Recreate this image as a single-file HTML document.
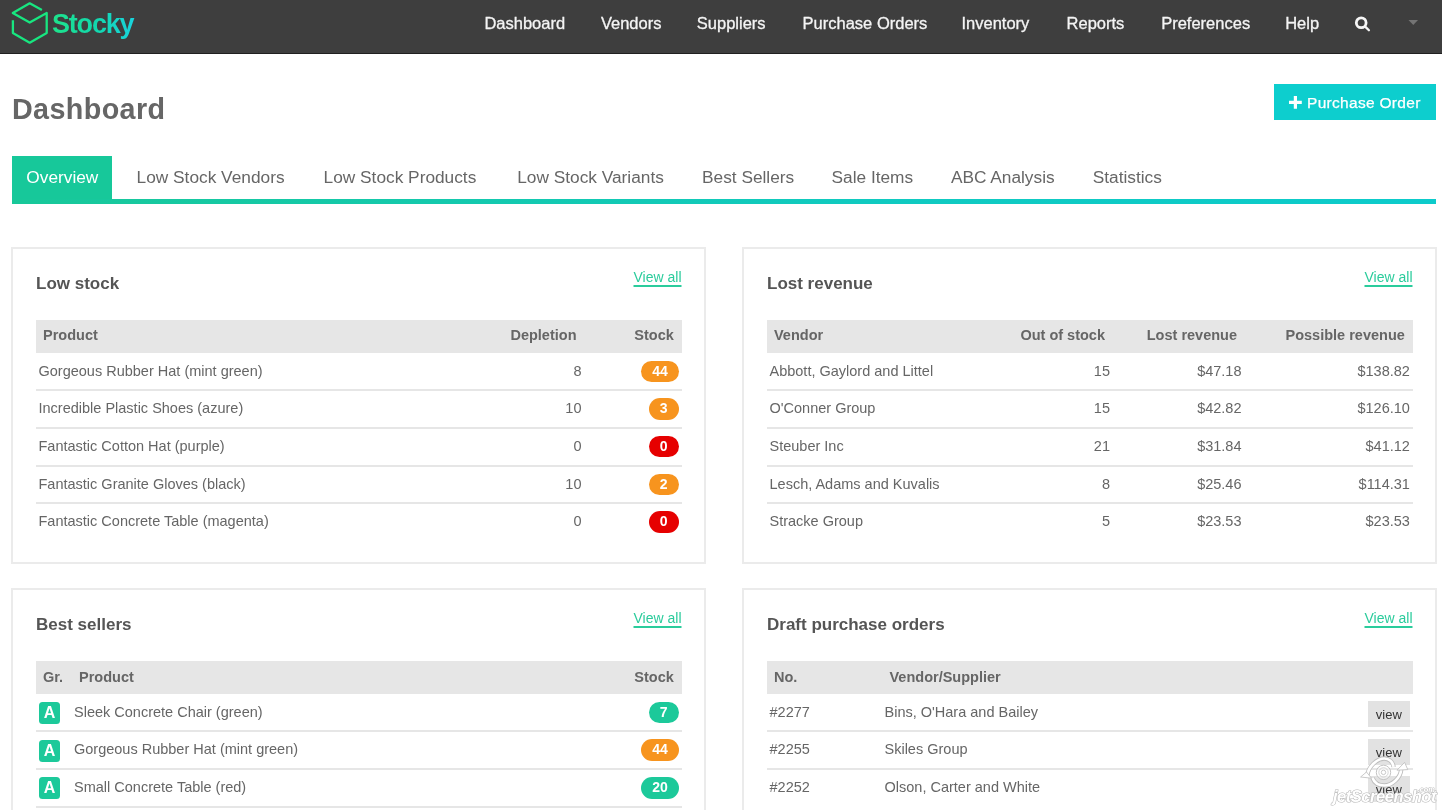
<!DOCTYPE html>
<html><head><meta charset="utf-8">
<style>
*{box-sizing:border-box;margin:0;padding:0}
html,body{width:1442px;height:810px;overflow:hidden;background:#fff}
body{position:relative;font-family:"Liberation Sans",sans-serif;color:#555;-webkit-font-smoothing:antialiased}
.abs{position:absolute;white-space:nowrap}
#nav{position:absolute;left:0;top:0;width:1442px;height:54px;background:#3e3e3e;border-bottom:1px solid #202020}
.ni{position:absolute;top:13.4px;line-height:20px;font-size:16.5px;color:#f4f4f4;-webkit-text-stroke:0.3px #f4f4f4}
#logo-text{position:absolute;left:52px;top:3.64px;line-height:40px;font-size:27px;font-weight:700;letter-spacing:-1.2px;padding-right:6px;
  background:linear-gradient(90deg,#1ee38a 0%,#12d8ad 50%,#1ad3e3 100%);-webkit-background-clip:text;background-clip:text;color:transparent}
#title{position:absolute;left:12px;top:98.8px;line-height:20px;font-size:28.7px;font-weight:700;color:#666;letter-spacing:0.4px}
#btn{position:absolute;left:1273.5px;top:83.6px;width:162.8px;height:36.2px;background:#0dcece}
#btn .t{position:absolute;left:33.5px;top:9.5px;line-height:20px;font-size:15.5px;letter-spacing:0.3px;color:#fff;-webkit-text-stroke:0.25px #fff}
#tabs{position:absolute;left:11.5px;top:155.5px;width:1424.5px;height:48.5px}
#tabline{position:absolute;left:0;top:43.5px;width:100%;height:5px;background:linear-gradient(90deg,#18c899 0%,#10cac0 60%,#0ccbcb 100%)}
#tabact{position:absolute;left:0;top:0;width:100px;height:44px;background:#17c89a}
.tab{position:absolute;top:11.8px;line-height:20px;font-size:17.3px;color:#666}
.panel{position:absolute;width:695px;border:2px solid #ebebeb;background:#fff}
.ptitle{position:absolute;left:23px;top:25.3px;line-height:20px;font-size:17px;font-weight:700;color:#555}
.viewall{position:absolute;right:22.5px;top:18.6px;line-height:20px;font-size:14px;color:#2bcc9c;text-decoration:underline;text-underline-offset:2.5px;text-decoration-thickness:1.5px}
.tbl{position:absolute;left:23px;width:645.5px;top:71.5px}
.th{position:relative;height:32.5px;background:#e6e6e6}
.th span{position:absolute;top:-0.6px;line-height:32.5px;font-size:14.5px;font-weight:700;color:#666}
.tr{position:relative;height:37.7px}
.tr.b::after{content:"";position:absolute;left:0;right:0;bottom:-1px;height:2px;background:#e6e6e6}
.tr span{position:absolute;top:0;line-height:37.7px;font-size:14.5px;color:#666}
.r{text-align:right}
.tr .badge{position:absolute;top:8px;height:21.6px;border-radius:11px;color:#fff;font-weight:700;font-size:14px;line-height:20.6px;text-align:center}
.or{background:#f7941e}.rd{background:#e60000}.gr{background:#1cc99a}
.tr .grade{position:absolute;left:2.7px;top:8.3px;width:21.7px;height:22px;border-radius:3.5px;background:#1cc99a;color:#fff;font-weight:700;font-size:16px;line-height:22.6px;text-align:center}
.tr .vbtn{position:absolute;top:7.3px;right:2.5px;width:42.3px;height:26px;background:#e2e2e2;color:#333;font-size:13px;line-height:27.6px;text-align:center}
</style></head><body>
<div id="root" style="position:absolute;left:0;top:0;width:1442px;height:810px;background:#fff;will-change:transform">
<div id="nav">
  <svg style="position:absolute;left:0;top:0" width="52" height="53" viewBox="0 0 52 53">
    <g fill="none" stroke="#18e680" stroke-width="2.3" stroke-linejoin="round" stroke-linecap="butt">
      <path d="M41.9 10.1 L29.7 3.3 L12.8 13 L29.7 22.6 L46.7 13 L46.7 33.1 L29.7 42.7 L12.9 33.1 L12.9 20.2"/>
    </g>
  </svg>
  <div id="logo-text">Stocky</div>
  <div class="ni" style="left:484.4px">Dashboard</div>
  <div class="ni" style="left:600.9px">Vendors</div>
  <div class="ni" style="left:696.8px">Suppliers</div>
  <div class="ni" style="left:802.6px">Purchase Orders</div>
  <div class="ni" style="left:961.5px">Inventory</div>
  <div class="ni" style="left:1066.6px">Reports</div>
  <div class="ni" style="left:1161.2px">Preferences</div>
  <div class="ni" style="left:1285.2px">Help</div>
  <svg style="position:absolute;left:1353px;top:16px" width="18" height="17" viewBox="0 0 18 17">
    <circle cx="8.2" cy="6.7" r="4.9" fill="none" stroke="#f6f6f6" stroke-width="2.8"/>
    <path d="M12.2 10.6 L15.9 14.3" stroke="#f6f6f6" stroke-width="2.3" stroke-linecap="round"/>
  </svg>
  <svg style="position:absolute;left:1408px;top:20px" width="11" height="6" viewBox="0 0 11 6"><path d="M0.5 0 L10 0 L5.25 5 Z" fill="#747474"/></svg>
</div>

<div id="title">Dashboard</div>
<div id="btn">
  <svg style="position:absolute;left:15.8px;top:12.2px" width="13" height="13" viewBox="0 0 13 13"><path d="M4.8 0h3.2v4.8h4.8v3.2H8v4.8H4.8V8H0V4.8h4.8z" fill="#fff"/></svg>
  <div class="t">Purchase Order</div>
</div>

<div id="tabs">
  <div id="tabact"></div>
  <div id="tabline"></div>
  <div class="tab" style="left:14.8px;color:#fff">Overview</div>
  <div class="tab" style="left:125.1px">Low Stock Vendors</div>
  <div class="tab" style="left:312.1px">Low Stock Products</div>
  <div class="tab" style="left:505.7px">Low Stock Variants</div>
  <div class="tab" style="left:690.5px">Best Sellers</div>
  <div class="tab" style="left:820px">Sale Items</div>
  <div class="tab" style="left:939.4px">ABC Analysis</div>
  <div class="tab" style="left:1081.2px">Statistics</div>
</div>

<!-- Panel 1: Low stock -->
<div class="panel" style="left:11px;top:246.5px;height:317px">
  <div class="ptitle">Low stock</div>
  <div class="viewall">View all</div>
  <div class="tbl">
    <div class="th"><span style="left:7px">Product</span><span class="r" style="right:105px">Depletion</span><span class="r" style="right:7.7px">Stock</span></div>
    <div class="tr b"><span style="left:2.5px">Gorgeous Rubber Hat (mint green)</span><span class="r" style="right:100px">8</span><span class="badge or" style="right:2.7px;width:37.6px">44</span></div>
    <div class="tr b"><span style="left:2.5px">Incredible Plastic Shoes (azure)</span><span class="r" style="right:100px">10</span><span class="badge or" style="right:2.7px;width:30.2px">3</span></div>
    <div class="tr b"><span style="left:2.5px">Fantastic Cotton Hat (purple)</span><span class="r" style="right:100px">0</span><span class="badge rd" style="right:2.7px;width:30.2px">0</span></div>
    <div class="tr b"><span style="left:2.5px">Fantastic Granite Gloves (black)</span><span class="r" style="right:100px">10</span><span class="badge or" style="right:2.7px;width:30.2px">2</span></div>
    <div class="tr"><span style="left:2.5px">Fantastic Concrete Table (magenta)</span><span class="r" style="right:100px">0</span><span class="badge rd" style="right:2.7px;width:30.2px">0</span></div>
  </div>
</div>

<!-- Panel 2: Lost revenue -->
<div class="panel" style="left:742px;top:246.5px;height:317px">
  <div class="ptitle">Lost revenue</div>
  <div class="viewall">View all</div>
  <div class="tbl">
    <div class="th"><span style="left:7px">Vendor</span><span class="r" style="right:307.5px">Out of stock</span><span class="r" style="right:175.5px">Lost revenue</span><span class="r" style="right:7.7px">Possible revenue</span></div>
    <div class="tr b"><span style="left:2.5px">Abbott, Gaylord and Littel</span><span class="r" style="right:302.5px">15</span><span class="r" style="right:171px">$47.18</span><span class="r" style="right:2.6px">$138.82</span></div>
    <div class="tr b"><span style="left:2.5px">O'Conner Group</span><span class="r" style="right:302.5px">15</span><span class="r" style="right:171px">$42.82</span><span class="r" style="right:2.6px">$126.10</span></div>
    <div class="tr b"><span style="left:2.5px">Steuber Inc</span><span class="r" style="right:302.5px">21</span><span class="r" style="right:171px">$31.84</span><span class="r" style="right:2.6px">$41.12</span></div>
    <div class="tr b"><span style="left:2.5px">Lesch, Adams and Kuvalis</span><span class="r" style="right:302.5px">8</span><span class="r" style="right:171px">$25.46</span><span class="r" style="right:2.6px">$114.31</span></div>
    <div class="tr"><span style="left:2.5px">Stracke Group</span><span class="r" style="right:302.5px">5</span><span class="r" style="right:171px">$23.53</span><span class="r" style="right:2.6px">$23.53</span></div>
  </div>
</div>

<!-- Panel 3: Best sellers -->
<div class="panel" style="left:11px;top:587.7px;height:260px">
  <div class="ptitle">Best sellers</div>
  <div class="viewall">View all</div>
  <div class="tbl">
    <div class="th"><span style="left:7px">Gr.</span><span style="left:43px">Product</span><span class="r" style="right:7.7px">Stock</span></div>
    <div class="tr b"><span class="grade">A</span><span style="left:38px">Sleek Concrete Chair (green)</span><span class="badge gr" style="right:2.7px;width:30.2px">7</span></div>
    <div class="tr b"><span class="grade">A</span><span style="left:38px">Gorgeous Rubber Hat (mint green)</span><span class="badge or" style="right:2.7px;width:37.6px">44</span></div>
    <div class="tr b"><span class="grade">A</span><span style="left:38px">Small Concrete Table (red)</span><span class="badge gr" style="right:2.7px;width:37.6px">20</span></div>
  </div>
</div>

<!-- Panel 4: Draft purchase orders -->
<div class="panel" style="left:742px;top:587.7px;height:260px">
  <div class="ptitle">Draft purchase orders</div>
  <div class="viewall">View all</div>
  <div class="tbl">
    <div class="th"><span style="left:7px">No.</span><span style="left:122.5px">Vendor/Supplier</span></div>
    <div class="tr b"><span style="left:2.5px">#2277</span><span style="left:117.5px">Bins, O'Hara and Bailey</span><span class="vbtn">view</span></div>
    <div class="tr b"><span style="left:2.5px">#2255</span><span style="left:117.5px">Skiles Group</span><span class="vbtn">view</span></div>
    <div class="tr"><span style="left:2.5px">#2252</span><span style="left:117.5px">Olson, Carter and White</span><span class="vbtn">view</span></div>
  </div>
</div>
<svg style="position:absolute;left:1320px;top:750px" width="122" height="60" viewBox="0 0 122 60">
  <g fill="none" stroke-linecap="butt">
    <path d="M47.4 25.4 C48 17 57 8.5 64.3 8.5 C69 8.5 73 12 73.6 16.9" stroke="#bdbdbd" stroke-width="4.4"/>
    <path d="M47.4 25.4 C48 17 57 8.5 64.3 8.5 C69 8.5 73 12 73.6 16.9" stroke="#fff" stroke-width="2.7"/>
    <path d="M81.2 19.5 C80.5 28 72 35.5 64.3 35.5 C58 35.5 54 32 52.5 27.9" stroke="#bdbdbd" stroke-width="4.4"/>
    <path d="M81.2 19.5 C80.5 28 72 35.5 64.3 35.5 C58 35.5 54 32 52.5 27.9" stroke="#fff" stroke-width="2.7"/>
  </g>
  <path d="M40.6 27 L46.5 22 L51.5 28.2 Z" fill="#fff" stroke="#bdbdbd" stroke-width="0.8" stroke-linejoin="round"/>
  <path d="M84.6 12.4 L87.8 19.6 L77 20.2 Z" fill="#fff" stroke="#bdbdbd" stroke-width="0.8" stroke-linejoin="round"/>
  <circle cx="63.5" cy="22.4" r="7.2" fill="#fff" fill-opacity="0.5" stroke="#bdbdbd" stroke-width="0.9"/>
  <circle cx="63.5" cy="22.4" r="4.7" fill="none" stroke="#c4c4c4" stroke-width="0.7"/>
  <circle cx="63.5" cy="22.4" r="2.2" fill="none" stroke="#bdbdbd" stroke-width="0.8"/>
  <text x="13" y="51.8" font-family="Liberation Sans" font-weight="700" font-style="italic" font-size="16.5" fill="#fff" stroke="#b5b5b5" stroke-width="1.1" paint-order="stroke" letter-spacing="-0.5" textLength="103" lengthAdjust="spacingAndGlyphs">jetScreenshot</text>
  <text x="97.5" y="42" font-family="Liberation Sans" font-weight="700" font-style="italic" font-size="7.5" fill="#fff" stroke="#b5b5b5" stroke-width="0.8" paint-order="stroke">.com</text>
</svg>
</div>
</body></html>
